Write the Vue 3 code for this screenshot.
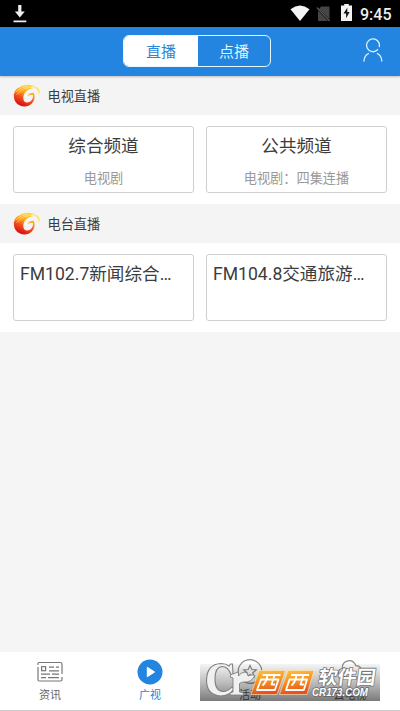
<script setup>
const sections = [
  { title: '电视直播', cards: [{ name: '综合频道', sub: '电视剧' }, { name: '公共频道', sub: '电视剧：四集连播' }] },
  { title: '电台直播', radio: true, cards: [{ name: 'FM102.7新闻综合…' }, { name: 'FM104.8交通旅游…' }] },
]
</script>

<template>
  <div class="screen">
    <div class="status">
      <svg class="download" width="14" height="18" viewBox="0 0 14 18">
        <path d="M5.2 0h3.2v6.5h3.4L6.8 12.6 1.9 6.5h3.3zM.5 15.6h12.8v1.7H.5z" fill="#eee" />
      </svg>
      <svg class="wifi" width="20" height="17" viewBox="0 0 20 17">
        <path d="M.5 4.2Q10-3.2 19.5 4.2L10 16z" fill="#f4f4f4" />
      </svg>
      <svg class="sim" width="15" height="16" viewBox="0 0 15 16">
        <path d="M5 .5h8.5v12.7L3.1 3zM2 4.6L12 15H2z" fill="#454545" />
        <path d="M.8 1.5L13.7 15" stroke="#5a5a5a" stroke-width="1.2" />
      </svg>
      <svg class="battery" width="11" height="17" viewBox="0 0 11 17">
        <path d="M3.2 0h4.6v1.5H11V17H0V1.5h3.2z" fill="#f2f2f2" />
        <path d="M6.3 3.7L2.5 9.6h2.6v4.7l3.5-6.2H6.3z" fill="#111" />
      </svg>
      <span class="time">9:45</span>
    </div>

    <header class="header">
      <div class="switch">
        <span class="seg on">直播</span>
        <span class="seg">点播</span>
      </div>
      <svg class="user" width="20" height="25" viewBox="0 0 20 25" fill="none" stroke="#d9f1ff" stroke-width="1.3" stroke-linecap="round">
        <path d="M14.6 11.8A6.4 6.4 0 1 1 16.3 8.6" />
        <path d="M1 23c.2-3.6 1.8-6.2 4.5-7.5M18.8 23c-.2-3.6-1.8-6.2-4.5-7.5" />
      </svg>
    </header>

    <main class="content">
      <section v-for="(s, i) in sections" :key="s.title">
        <h2 class="band">
          <svg class="logo" width="28" height="24" viewBox="0 0 28 24">
            <defs>
              <linearGradient :id="'flame' + i" gradientUnits="userSpaceOnUse" x1="18" y1="1" x2="9" y2="22">
                <stop offset="0" stop-color="#ffe04a" />
                <stop offset=".4" stop-color="#ffa51c" />
                <stop offset=".65" stop-color="#f3521b" />
                <stop offset="1" stop-color="#d80d15" />
              </linearGradient>
            </defs>
            <path :fill="'url(#flame' + i + ')'" d="M3.5 5Q10 .3 17 .8Q20 1 22 2.2Q18 2.4 15 3.8Q18 3.4 20.5 4Q15 5.2 12.6 8C9 12 9.6 18.6 14.2 18.6C18.2 18.6 20.6 14.4 19.8 11Q17.3 10 14.6 12Q16.6 8.2 20.8 8.8C23.6 15 19 22.4 11.6 22.4C3.8 22.4-.2 16 1.1 9.6Q1.6 7 3.5 5Z" />
            <path d="M19.5 1.2Q25 2.2 26.9 6.4Q27.2 9 25.4 11.6Q26 8.4 24.4 6Q22.6 3.8 19.5 3.4Q22 2.8 23.5 3.4Q22 1.8 19.5 1.2Z" fill="#ffe27a" />
            <path d="M2.6 8.4Q7 3.3 14.4 2.4M4 10.6Q8.4 4.6 15 3.8" fill="none" stroke="#fff3b8" stroke-width=".6" />
          </svg>
          <span>{{ s.title }}</span>
        </h2>
        <div class="cards">
          <article v-for="c in s.cards" :key="c.name" class="card" :class="{ radio: s.radio }">
            <div class="name">{{ c.name }}</div>
            <div v-if="c.sub" class="sub">{{ c.sub }}</div>
          </article>
        </div>
      </section>
    </main>

    <nav class="tabs">
      <div class="tab">
        <svg width="26" height="26" viewBox="0 0 26 26" fill="none" stroke="#777" stroke-width="1.2">
          <path d="M1 6V4.5Q1 3.5 2 3.5H23.5Q25 3.5 25 5V15M25 18v2.5q0 1.5-1.5 1.5H2.5Q1 22 1 20.5V8" />
          <rect x="4.6" y="7.7" width="4" height="4" />
          <path d="M12 8.2h5M19 8.2h3M12 11.8h10M4 15.2h9M15 15.2h7M4 18.7h5M11 18.7h11" />
        </svg>
        <span>资讯</span>
      </div>
      <div class="tab active">
        <svg width="26" height="26" viewBox="0 0 26 26">
          <circle cx="13" cy="13" r="12.5" fill="#2385df" />
          <path d="M10.3 8.3L17.6 13l-7.3 4.7z" fill="#fff" stroke="#fff" stroke-linejoin="round" />
        </svg>
        <span>广视</span>
      </div>
      <div class="tab">
        <svg width="26" height="26" viewBox="0 0 26 26" fill="none" stroke="#888" stroke-width="1.2">
          <circle cx="13" cy="12.5" r="11.8" />
          <path d="M13 6.5l1.8 4 4.4.4-3.3 2.9 1 4.2-3.9-2.3L9.1 18l1-4.2-3.3-2.9 4.4-.4z" />
        </svg>
        <span>活动</span>
      </div>
      <div class="tab">
        <svg width="26" height="26" viewBox="0 0 26 26" fill="none" stroke="#888" stroke-width="1.2">
          <path d="M7 19H5.5Q1 18 1.5 13.5Q2 9.8 5.2 9.5Q5 3 11 1.8Q16.5 1 18.8 6.7Q24.8 7 25 13Q25 18.5 20 19H7z" />
        </svg>
        <span>云电视</span>
      </div>
      <svg class="mark" width="180" height="38" viewBox="0 0 180 38">
        <defs>
          <linearGradient id="shade" x2="0" y2="1">
            <stop offset="0" stop-color="#000" stop-opacity=".04" />
            <stop offset=".5" stop-color="#000" stop-opacity=".26" />
            <stop offset="1" stop-color="#000" stop-opacity=".52" />
          </linearGradient>
          <linearGradient id="orange" x2=".2" y2="1">
            <stop offset="0" stop-color="#ffc341" />
            <stop offset=".5" stop-color="#f79321" />
            <stop offset="1" stop-color="#e6511c" />
          </linearGradient>
        </defs>
        <rect width="180" height="37" fill="url(#shade)" />
        <path d="M32.5 0l.5 10.5h-2Q28 2.5 22 2.5Q15 3 15 15Q15 27 23 27.5Q28 27.5 32 23l2 2Q29 32 20.5 32Q6.5 31 6.5 16Q7 0 21 -.5Q26-.5 29 2L30.5 0z" fill="#f0f0f0" stroke="#808080" stroke-width="1.1" />
        <path d="M31 10.5l7.5-2.5v4Q41 8 45 8q3 1 3 4 4-2 7-.5-4 7-10 6.500-3-.5-5.500 1.500v8.500l4 1v2H30v-2l3-1V14l-3-1z" fill="#f0f0f0" stroke="#808080" stroke-width=".9" />
        <g fill="url(#orange)" stroke="#ffe9bd" stroke-width=".6">
          <path d="M59 6.500h26.500l-8.500 24H51z" />
          <path d="M88 6.500h26l-7 24H79.500z" />
        </g>
        <g fill="none" stroke="#fff" stroke-width="1.8" stroke-linejoin="round">
          <path d="M62.500 11h18M61 15.500h17.500l-3.600 10.500H57zM67.500 11q-1 7-5 10.500M74.500 11l-3 9.500h3.500" />
          <path d="M91 11h18M89.500 15.500h17.500l-3.200 10.500H86zM96.500 11q-1 7-5 10.500M103.500 11l-3 9.500h3.500" />
        </g>
        <text class="mark-cn" x="119" y="19.500" transform="translate(1.500 0) skewX(-8)">软件园</text>
        <text class="mark-en" x="112" y="32" textLength="56" lengthAdjust="spacingAndGlyphs">CR173.COM</text>
      </svg>
    </nav>
  </div>
</template>

<style>
body { margin: 0; }
</style>

<style scoped>
.screen {
  width: 400px;
  height: 711px;
  box-sizing: border-box;
  display: flex;
  flex-direction: column;
  overflow: hidden;
  background: #f5f5f5;
  color: #3c3c3c;
  font-family: Roboto, "Noto Sans CJK SC", sans-serif;
}
.status {
  flex: none;
  height: 27px;
  display: flex;
  align-items: flex-start;
  background: #000;
}
.download { margin: 5px 0 0 13px; }
.wifi { margin: 5px 0 0 auto; }
.sim { margin: 6px 0 0 6px; }
.battery { margin: 4px 0 0 10px; }
.time {
  width: 40px;
  margin: 4px 0 0 8px;
  color: #eee;
  font-size: 16px;
  font-weight: 500;
  line-height: 21px;
}
.header {
  flex: none;
  height: 49px;
  display: flex;
  align-items: flex-start;
  background: #2385df;
  box-shadow: 0 1px 2px rgba(0, 0, 0, .22);
  z-index: 1;
}
.switch {
  width: 148px;
  height: 32px;
  box-sizing: border-box;
  margin: 8px 0 0 123px;
  display: flex;
  border: 1.5px solid #e5f7ff;
  border-radius: 6px;
  overflow: hidden;
}
.seg {
  flex: 1;
  text-align: center;
  color: #dff4ff;
  font-size: 15px;
  line-height: 32px;
}
.seg.on { flex: 0 0 74px; background: #fff; color: #2f86d4; }
.user { margin: 11px 17px 0 auto; }
.band {
  height: 39px;
  box-sizing: border-box;
  margin: 0;
  padding-left: 13px;
  display: flex;
  align-items: center;
  gap: 6.5px;
  background: #f4f4f4;
  font-size: 13.2px;
  font-weight: 400;
}
.content { flex: 1; }
.cards {
  height: 89px;
  box-sizing: border-box;
  display: grid;
  grid-template-columns: 181px 181px;
  gap: 12px;
  padding: 11px 13px 11px;
  background: #fff;
}
.card {
  height: 67px;
  box-sizing: border-box;
  border: 1px solid #cfcfcf;
  border-radius: 3px;
  text-align: center;
  padding-top: 6px;
}
.card.radio { text-align: left; padding-left: 6px; }
.name { font-size: 17.6px; line-height: 26px; white-space: nowrap; }
.sub { margin-top: 10px; font-size: 13.2px; line-height: 20px; color: #999; }
.tabs {
  position: relative;
  flex: none;
  height: 59px;
  box-sizing: border-box;
  display: grid;
  grid-template-columns: repeat(4, 1fr);
  background: #fff;
  border-bottom: 1px solid #ccc;
}
.tab {
  display: flex;
  flex-direction: column;
  align-items: center;
  padding-top: 7px;
  color: #666;
  font-size: 11px;
  line-height: 16px;
}
.tab svg { flex: none; }
.tab span { margin-top: 3px; }
.tab.active { color: #2385df; }
.mark { position: absolute; left: 200px; top: 12px; overflow: visible; }
.mark-cn {
  font-family: "Noto Sans CJK SC", sans-serif;
  font-size: 19px;
  font-weight: 700;
  fill: #fff;
  stroke: #777;
  stroke-width: 1.6px;
  paint-order: stroke;
}
.mark-en {
  font-family: "Liberation Sans", sans-serif;
  font-size: 10.5px;
  font-weight: 700;
  font-style: italic;
  fill: #fff;
  stroke: #666;
  stroke-width: 1.5px;
  paint-order: stroke;
}
</style>
